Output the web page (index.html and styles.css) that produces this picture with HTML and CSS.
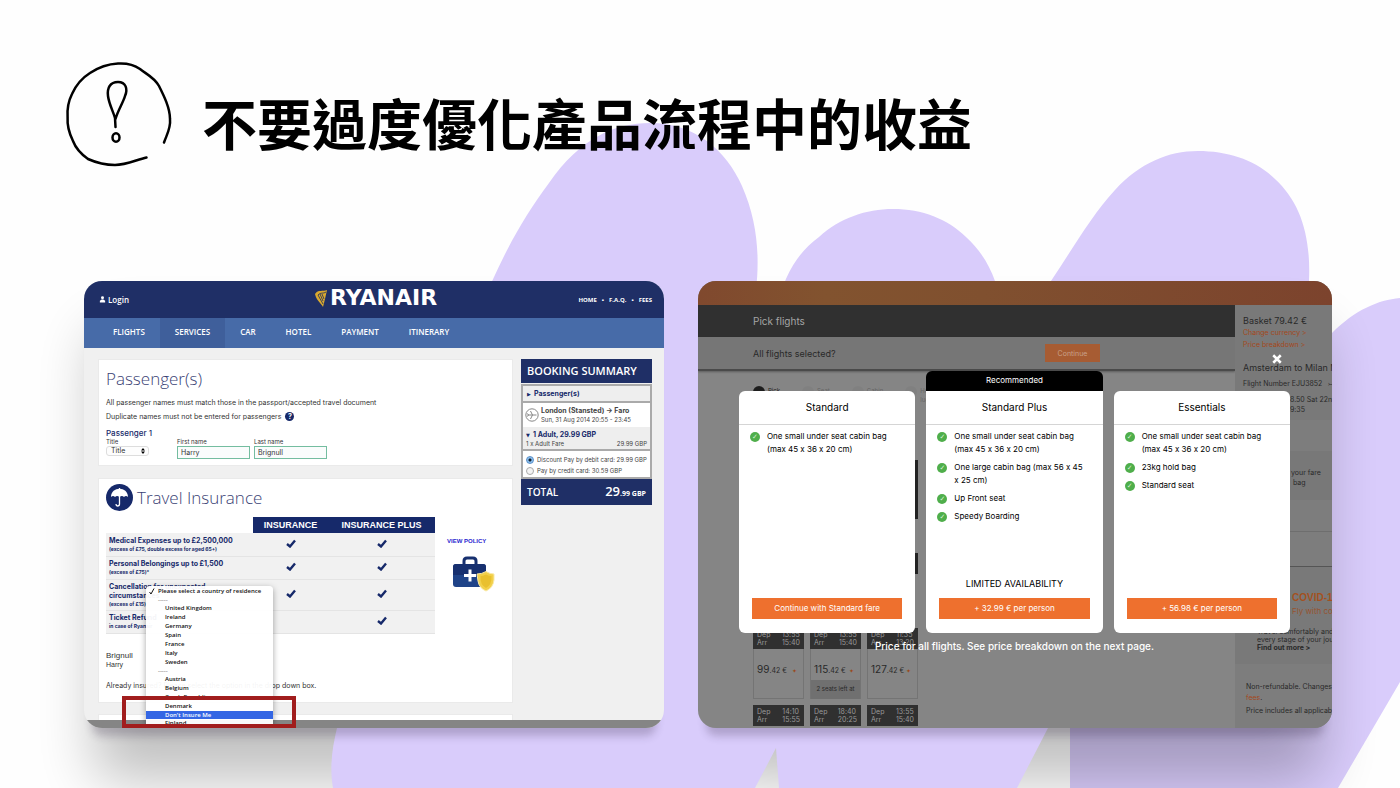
FILE: index.html
```html
<!DOCTYPE html>
<html lang="zh-Hant">
<head>
<meta charset="utf-8">
<title>不要過度優化產品流程中的收益</title>
<link rel="stylesheet" href="styles.css">
</head>
<body>
<main class="slide">
  <svg class="backdrop" viewBox="0 0 1400 788" preserveAspectRatio="none" aria-hidden="true">
    <defs>
      <filter id="soft" x="-30%" y="-30%" width="160%" height="160%"><feGaussianBlur stdDeviation="28"/></filter>
    </defs>
    <g class="blob">
      <path d="M1070 788V300L1051 281C1075 245 1092 215 1115 190C1140 163 1168 151 1198 151C1228 151 1256 160 1275 179C1300 202 1311 235 1309 281V350L1332 333C1355 310 1378 300 1400 298V682L1338 788Z"/>
    </g>
    <g class="shade" filter="url(#soft)">
      <rect x="94" y="330" width="560" height="450" rx="20"/>
      <rect x="708" y="330" width="614" height="450" rx="20"/>
    </g>
    <g class="blob">
      <path d="M333 788C329 765 333 745 337 728L480 310C500 260 520 222 549 183C580 138 615 123 650 123C695 123 726 150 742 186C757 220 760 255 756 290V310H776C784 275 798 252 819 237C840 218 866 209 893 209C922 209 948 219 966 237C980 250 989 264 995 281L1048 728L1017 788H779L776 748L755 788Z"/>
    </g>
  </svg>

  <header class="title">
    <svg class="title-icon" viewBox="0 0 106 104" aria-hidden="true">
      <path d="M98 80.500C101 72 105 66 104 57C104 46 98 34 93 24C88 15 80 12 74 7C67 2 60 1 52 1.500C42 2 33 5 24 11C16 16 10 23 6 32C2 40 1 46 1.600 55C1 64 3 71 7 79C10 87 15 92 22 97C31 101 40 103 49 103C60 103 70 98 80.500 95.500" />
      <path d="M49.500 65L49 56C47 49 43 42 42 34C41 26 44 20 52 20C60 20 62 27 59 34C57 41 52 48 49.500 57"/>
      <ellipse cx="50" cy="75.500" rx="3.500" ry="4.300"/>
    </svg>
    <h1>不要過度優化產品流程中的收益</h1>
  </header>

  <div class="shots">
    <section class="shot ryan">
      <div class="ryan-top">
        <a class="login" href="#"><svg viewBox="0 0 8 8"><circle cx="4" cy="2" r="1.700"/><path d="M1 7.500V5.500L3 4H5L7 5.500V7.500Z"/></svg>Login</a>
        <div class="logo">
          <svg viewBox="0 0 14 19"><path d="M1 5C4 0 9 3 13 1L11 10L9 18C7 14 2 11 1 5Z" fill="#d9a92f"/><path d="M4 6L9 15M6 5L9 12M8 5L10 10M4 6C7 3 9 5 12 3" fill="none" stroke="#1c2b5e" stroke-width=".8"/></svg>
          <span>RYANAIR</span>
        </div>
        <div class="toplinks"><a href="#">HOME</a><i>•</i><a href="#">F.A.Q.</a><i>•</i><a href="#">FEES</a></div>
      </div>
      <nav class="ryan-nav">
        <a href="#">FLIGHTS</a><a class="on" href="#">SERVICES</a><a href="#">CAR</a><a href="#">HOTEL</a><a href="#">PAYMENT</a><a href="#">ITINERARY</a>
      </nav>
      <div class="ryan-body">
        <div class="panels">
          <section class="panel passengers">
            <h2>Passenger(s)</h2>
            <p>All passenger names must match those in the passport/accepted travel document</p>
            <p>Duplicate names must not be entered for passengers <b class="help">?</b></p>
            <h3>Passenger 1</h3>
            <div class="fields">
              <div class="f-title"><label for="t">Title</label><div class="selwrap"><select id="t"><option>Title</option></select><svg viewBox="0 0 4 6"><path d="M0 2.500L2 0L4 2.500ZM0 3.500L2 6L4 3.500Z"/></svg></div></div>
              <div class="f-name"><label for="fn">First name</label><input id="fn" value="Harry"></div>
              <div class="f-name"><label for="ln">Last name</label><input id="ln" value="Brignull"></div>
            </div>
          </section>
          <section class="panel insurance">
            <div class="ins-head">
              <svg viewBox="0 0 27 27"><circle cx="13.500" cy="13.500" r="13.500" fill="#16296a"/><path d="M5 13C5 2 22 2 22 13Q20 11 18 13Q16 11 13.500 13Q11 11 9 13Q7 11 5 13Z" fill="#fff"/><path d="M13.500 4V20Q13.500 22 11.500 22Q10 22 10 20" fill="none" stroke="#fff" stroke-width="1.300"/></svg>
              <h2>Travel Insurance</h2>
            </div>
            <div class="ins-main">
              <table>
                <thead><tr><td></td><th>INSURANCE</th><th>INSURANCE PLUS</th></tr></thead>
                <tbody>
                  <tr><td>Medical Expenses up to £2,500,000<small>(excess of £75, double excess for aged 65+)</small></td><td class="c"><svg class="tick" viewBox="0 0 10 9"><path d="M1 5L4 7.500L9 1.500"/></svg></td><td class="c"><svg class="tick" viewBox="0 0 10 9"><path d="M1 5L4 7.500L9 1.500"/></svg></td></tr>
                  <tr><td>Personal Belongings up to £1,500<small>(excess of £75)*</small></td><td class="c"><svg class="tick" viewBox="0 0 10 9"><path d="M1 5L4 7.500L9 1.500"/></svg></td><td class="c"><svg class="tick" viewBox="0 0 10 9"><path d="M1 5L4 7.500L9 1.500"/></svg></td></tr>
                  <tr><td>Cancellation for unexpected<br>circumstances<small>(excess of £15)</small></td><td class="c"><svg class="tick" viewBox="0 0 10 9"><path d="M1 5L4 7.500L9 1.500"/></svg></td><td class="c"><svg class="tick" viewBox="0 0 10 9"><path d="M1 5L4 7.500L9 1.500"/></svg></td></tr>
                  <tr><td>Ticket Refund<small>in case of Ryanair</small></td><td class="c"></td><td class="c"><svg class="tick" viewBox="0 0 10 9"><path d="M1 5L4 7.500L9 1.500"/></svg></td></tr>
                </tbody>
              </table>
              <div class="policy">
                <a href="#">VIEW POLICY</a>
                <svg viewBox="0 0 42 36"><path d="M11 8V5Q11 2 14 2H20Q23 2 23 5V8" fill="none" stroke="#17306f" stroke-width="3"/><rect x="0" y="8" width="33" height="23" rx="3" fill="#1f4388"/><path d="M0 19H33V11Q33 8 30 8H3Q0 8 0 11Z" fill="#17306f"/><path d="M17 13.500V25.500M11 19.500H23" stroke="#fff" stroke-width="3"/><path d="M24 18Q29 18 33 15.500Q37 18 41 18V24Q40 32 33 35Q26 32 25 25Z" fill="#f2d04a" stroke="#f9e9a6"/><path d="M27.500 20Q30 20 33 18.500Q36 20 38.500 20Q39 29 33 32Q27 29 27.500 20Z" fill="#e9c02e"/></svg>
              </div>
            </div>
            <p class="who">Brignull<span>Harry</span></p>
            <p class="already">Already insured? Please select the option in the drop down box.</p>
            <ul class="menu" role="listbox" aria-label="Country of residence">
              <li class="first"><svg viewBox="0 0 6 7"><path d="M.500 4L2 6L5 .500"/></svg>Please select a country of residence</li>
              <li class="sep">-----</li><li>United Kingdom</li><li>Ireland</li><li>Germany</li><li>Spain</li><li>France</li><li>Italy</li><li>Sweden</li>
              <li class="sep">-----</li><li>Austria</li><li>Belgium</li><li>Czech Republic</li><li>Denmark</li><li class="hot" role="option" aria-selected="true">Don't Insure Me</li><li>Finland</li>
            </ul>
            <div class="mark"></div>
          </section>
          <section class="panel peek"></section>
        </div>
        <aside class="summary">
          <h2>BOOKING SUMMARY</h2>
          <div class="box">
            <div class="pax"><i>▶</i>Passenger(s)</div>
            <div class="leg"><svg viewBox="0 0 14 14"><circle cx="7" cy="7" r="6.200"/><path d="M2.500 7H11.500M7.500 7L5.500 3M7.500 7L5.500 11M3.500 7L2.500 5.500M3.500 7L2.500 8.500"/></svg><div><b>London (Stansted) → Faro</b><span>Sun, 31 Aug 2014 20:55 - 23:45</span></div></div>
            <div class="fare"><b><i>▼</i>1 Adult, 29.99 GBP</b><p><span>1 x Adult Fare</span><span>29.99 GBP</span></p></div>
            <div class="pay">
              <label><input type="radio" name="pay" checked>Discount Pay by debit card: 29.99 GBP</label>
              <label><input type="radio" name="pay">Pay by credit card: 30.59 GBP</label>
            </div>
          </div>
          <div class="total"><span>TOTAL</span><strong>29<small>.99 GBP</small></strong></div>
        </aside>
      </div>
      <div class="ryan-foot"></div>
    </section>

    <section class="shot easy">
      <div class="brand"></div>
      <div class="easy-page">
        <div class="flow">
          <div class="pick">Pick flights</div>
          <div class="sel"><span>All flights selected?</span><button class="cont" type="button">Continue</button></div>
          <div class="results">
            <div class="steps"><span class="now"><i></i>Pick</span><span><i></i>Seat</span><span><i></i>Cabin</span><span><i></i>Hold<br>luggage</span></div>
            <div class="rail"><i class="tall"></i><i></i></div>
            <div class="flights">
              <div class="slot"><div class="when"><span>Dep</span><span>13:55</span><span>Arr</span><span>15:40</span></div><div class="cost"><b>99</b>.42 €<i>✦</i></div></div>
              <div class="slot"><div class="when"><span>Dep</span><span>13:55</span><span>Arr</span><span>15:40</span></div><div class="cost"><b>115</b>.42 €<i>✦</i></div><div class="left">2 seats left at</div></div>
              <div class="slot"><div class="when"><span>Dep</span><span>11:35</span><span>Arr</span><span>13:20</span></div><div class="cost"><b>127</b>.42 €<i>✦</i></div></div>
              <div class="when"><span>Dep</span><span>14:10</span><span>Arr</span><span>15:55</span></div>
              <div class="when"><span>Dep</span><span>18:40</span><span>Arr</span><span>20:25</span></div>
              <div class="when"><span>Dep</span><span>13:55</span><span>Arr</span><span>15:40</span></div>
            </div>
          </div>
        </div>
        <aside class="basket">
          <div class="trip">
            <h3>Basket 79.42 €</h3>
            <a href="#">Change currency &gt;</a>
            <a href="#">Price breakdown &gt;</a>
            <h4>Amsterdam to Milan M</h4>
            <p>Flight Number EJU3852 &nbsp; ⤚–</p>
            <p class="times">8.50 Sat 22nd<br>9:35</p>
          </div>
          <div class="bags">your fare<br>&nbsp;bag</div>
          <div class="rule"></div>
          <div class="covid">
            <h3>COVID-19</h3><h4>Fly with co</h4>
            <p>Travel comfortably and<br>every stage of your jou<br><b>Find out more &gt;</b></p>
          </div>
          <div class="terms"><p>Non-refundable. Changes</p><a href="#">fees</a>.<p>Price includes all applicable</p></div>
        </aside>
      </div>

      <div class="modal">
        <div class="plan">
          <div class="card"><h3>Standard</h3>
            <ul><li>One small under seat cabin bag (max 45 x 36 x 20 cm)</li></ul>
            <button type="button">Continue with Standard fare</button></div>
        </div>
        <div class="plan best">
          <div class="flag">Recommended</div>
          <div class="card"><h3>Standard Plus</h3>
            <ul><li>One small under seat cabin bag (max 45 x 36 x 20 cm)</li><li>One large cabin bag (max 56 x 45 x 25 cm)</li><li>Up Front seat</li><li>Speedy Boarding</li></ul>
            <p class="limited">LIMITED AVAILABILITY</p>
            <button type="button">+ 32.99 € per person</button></div>
        </div>
        <div class="plan">
          <div class="card"><h3>Essentials</h3>
            <ul><li>One small under seat cabin bag (max 45 x 36 x 20 cm)</li><li>23kg hold bag</li><li>Standard seat</li></ul>
            <button type="button">+ 56.98 € per person</button></div>
        </div>
        <p class="note">Price for all flights. See price breakdown on the next page.</p>
        <button class="close" type="button" aria-label="Close"><svg viewBox="0 0 8 8"><path d="M1 1L7 7M7 1L1 7"/></svg></button>
      </div>
    </section>
  </div>
</main>
</body>
</html>
```

FILE: styles.css
```css
* { box-sizing: border-box; margin: 0; padding: 0; }
body { background: #fefefe; font-family: "Liberation Sans", Arial, "Noto Sans CJK TC", sans-serif; }
a { color: inherit; text-decoration: none; }
i { font-style: normal; }
ul { list-style: none; }
button, input, select { font: inherit; color: inherit; border: 0; border-radius: 0; }

.slide { position: relative; min-height: 100vh; overflow: hidden; padding: 62px 68px 60px 84px; }
.backdrop { position: absolute; inset: 0; width: 100%; height: 100%; }
.blob { fill: #d9ccfb; }
.shade { fill: #000; opacity: .24; }

.title { position: relative; display: flex; align-items: flex-end; gap: 30px; margin-left: -18px; margin-bottom: 115px; }
.title-icon { width: 106px; height: 104px; flex: none; fill: none; stroke: #000; stroke-width: 2.500; stroke-linecap: round; stroke-linejoin: round; overflow: visible; }
.title h1 { font: bold 55px/90px "Noto Sans CJK TC", sans-serif; }

.shots { position: relative; display: grid; grid-template-columns: 580fr 634fr; gap: 34px; }
.shot { position: relative; overflow: hidden; border-radius: 18px; box-shadow: 0 16px 8px -8px rgba(40, 30, 60, .24); min-width: 0; }

/* booking form */
.ryan { display: flex; flex-direction: column; background: #f0f0f0; color: #333; font: 7px/9px Inter, "Liberation Sans", sans-serif; }
.ryan-top { display: grid; grid-template-columns: 1fr auto 1fr; align-items: center; height: 37px; padding: 0 12px 0 15px; background: #1f2f66; color: #fff; }
.login { display: flex; align-items: center; gap: 2px; font: 600 8px/10px "Open Sans", sans-serif; }
.login svg { width: 7px; height: 7px; fill: #fff; }
.logo { display: flex; align-items: center; gap: 2px; padding-bottom: 3px; font: bold 22px/30px "DejaVu Sans", sans-serif; }
.logo svg { width: 14px; height: 19px; }
.toplinks { display: flex; justify-content: flex-end; gap: 5px; font: bold 6px/10px "Open Sans", sans-serif; }
.ryan-nav { display: flex; height: 30px; padding-left: 14px; background: #476ba8; color: #fff; font: 600 8px/28px "Open Sans", sans-serif; }
.ryan-nav a { padding: 0 15px; }
.ryan-nav .on { background: #3f5f9b; }
.ryan-body { display: flex; align-items: flex-start; gap: 9px; padding: 11px 12px 0 15px; }
.ryan-foot { height: 8px; background: #858585; }
.panels { flex: 1; display: flex; flex-direction: column; gap: 14px; min-width: 0; padding-top: 1px; }
.panel { background: #fff; padding: 0 7px; outline: 1px solid #eaeaea; }
.panel h2 { font: 300 17px/24px "Open Sans", sans-serif; color: #3a4274; }
.passengers { padding-top: 7px; height: 105px; }
.passengers p { line-height: 14px; }
.passengers h2 { margin-bottom: 5px; }
.help { display: inline-block; width: 9px; border-radius: 50%; background: #16296a; color: #fff; text-align: center; font-size: 7px; line-height: 9px; margin-left: 2px; }
.passengers h3 { font-size: 8px; line-height: 9px; margin-top: 5px; font-weight: 500; color: #16296a; }
.fields { display: flex; font-size: 6px; }
.fields label { display: block; line-height: 8px; }
.f-title { width: 71px; }
.f-name { width: 77px; }
.selwrap { position: relative; width: 43px; }
.fields select { appearance: none; display: block; width: 43px; height: 10px; padding: 0 4px; border: 1px solid #ddd; border-radius: 3px; background: #fdfdfd; font-size: 7px; line-height: 8px; }
.selwrap svg { position: absolute; right: 4px; top: 2px; width: 4px; height: 6px; }
.fields input { display: block; width: 73px; height: 13px; padding: 0 3px; border: 1px solid #74bda0; background: #fafcfc; font-size: 7px; }
.insurance { position: relative; min-height: 223px; }
.ins-head { display: flex; align-items: center; gap: 4px; padding-top: 5px; }
.ins-head svg { width: 27px; height: 27px; }
.ins-main { display: flex; justify-content: space-between; padding: 6px 17px 0 0; }
table { width: 329px; border-collapse: collapse; color: #16296a; font-weight: bold; }
th { background: #16296a; color: #fff; height: 16px; font: bold 9px/15px "Liberation Sans", sans-serif; white-space: nowrap; }
th:nth-child(2) { width: 75px; }
th:nth-child(3) { width: 107px; }
tbody tr { background: #f1f1f1; border-bottom: 1px solid #e4e4e4; }
tbody td { height: 23px; padding: 2px 3px; }
tbody td small { display: block; font-size: 5px; line-height: 8px; }
.c { text-align: center; }
.tick { width: 10px; height: 9px; fill: none; stroke: #16296a; stroke-width: 2.400; }
.policy { width: 41px; margin-top: 19px; font: bold 6px/10px "Liberation Sans", sans-serif; color: #2a1fd0; white-space: nowrap; }
.policy svg { display: block; width: 42px; height: 36px; margin: 10px 0 0 6px; }
.who { margin-top: 17px; font: 8px/10px "Liberation Sans", sans-serif; }
.who span { display: block; font-size: 7px; line-height: 8px; }
.already { margin-top: 12px; line-height: 10px; }
.menu { position: absolute; left: 47px; top: 107px; width: 127px; padding-top: 1px; background: rgba(255, 255, 255, .95); border-radius: 4px 4px 0 0; box-shadow: 0 2px 6px rgba(0, 0, 0, .35); color: #111; font: 600 6px/9px "Open Sans", sans-serif; z-index: 2; }
.menu li { padding-left: 19px; }
.menu .first { display: flex; gap: 3px; padding-left: 3px; }
.menu .first svg { width: 6px; height: 7px; fill: none; stroke: #111; margin-top: 1px; }
.menu .sep { padding-left: 12px; line-height: 8px; color: #888; }
.menu .hot { background: #3466e4; color: #fff; line-height: 8px; }
.mark { position: absolute; left: 23px; top: 217px; width: 174px; height: 32px; border: 4px solid #a11d1d; z-index: 3; }
.peek { height: 5px; margin-top: -1px; }

.summary { width: 131px; color: #444; }
.summary h2 { height: 24px; padding-left: 6px; background: #1f2f66; color: #fff; font: 600 11px/24px "Open Sans", sans-serif; }
.box { border: 2px solid #aaa; margin-top: 1px; background: #fff; }
.pax { height: 15px; padding-left: 4px; background: #eee; font-weight: bold; line-height: 15px; color: #16296a; }
.pax i, .fare i { display: inline-block; width: 7px; font: 5px/5px "DejaVu Sans", sans-serif; }
.leg { display: flex; align-items: center; gap: 2px; height: 26px; padding-left: 2px; border-top: 2px solid #aaa; font-size: 6px; line-height: 9px; white-space: nowrap; }
.leg svg { width: 14px; height: 14px; fill: none; stroke: #888; }
.leg b, .leg span { display: block; }
.leg b { font-size: 7px; }
.fare { height: 22px; padding: 3px 3px 0; background: #eee; line-height: 9px; font-size: 6px; }
.fare b { display: block; font-size: 7px; color: #16296a; }
.fare p { display: flex; justify-content: space-between; }
.pay { border-top: 2px solid #aaa; padding: 3px 3px 1px; font-size: 6px; line-height: 11px; white-space: nowrap; }
.pay label { display: flex; align-items: center; gap: 3px; }
.pay input { appearance: none; width: 8px; height: 8px; border: 1px solid #aaa; border-radius: 50%; background: #f4f4f4; }
.pay input:checked { border: 1px solid #5b8fc7; background: radial-gradient(#123 0 1px, #8bc0ef 2px); }
.total { display: flex; justify-content: space-between; align-items: center; height: 26px; padding: 0 6px; background: #1f2f66; color: #fff; font: 600 10px/26px "Open Sans", sans-serif; }
.total strong { font-size: 13px; font-weight: 600; }
.total small { font-size: 7px; font-weight: 700; }

/* fare picker */
.easy { display: flex; flex-direction: column; background: #858585; color: #292929; font: 7px/9px Inter, sans-serif; font-feature-settings: "calt" 0; }
.brand { height: 24px; background: linear-gradient(90deg, #80492e, #82532f 20%, #80502f 45%, #7c432d); }
.easy-page { flex: 1; display: flex; min-height: 0; }
.flow { flex: 1; display: flex; flex-direction: column; min-width: 0; }
.pick { height: 32px; padding-left: 55px; background: #303030; color: #a5a5a5; font-size: 10px; line-height: 32px; }
.sel { display: flex; align-items: center; justify-content: space-between; height: 34px; padding: 0 135px 0 55px; background: #767676; border-bottom: 2px solid #4a4a4a; font-size: 9px; box-shadow: 0 1px 2px rgba(0, 0, 0, .3); }
.cont { width: 55px; height: 18px; background: #a75c33; color: #c9a18a; font-size: 7px; }
.results { flex: 1; display: flex; flex-direction: column; justify-content: space-between; padding: 15px 0 2px 55px; }
.steps { display: flex; gap: 22px; height: 20px; color: #666; font-size: 6px; }
.steps span { display: flex; gap: 3px; }
.steps i { width: 12px; height: 12px; border-radius: 50%; background: #808080; }
.steps .now { color: #222; }
.steps .now i { background: #1d1d1d; }
.rail { display: grid; gap: 34px; width: 165px; }
.rail i { height: 21px; background: #222; }
.rail .tall { height: 59px; }
.flights { display: grid; grid-template-columns: repeat(3, 51px); gap: 6px; }
.slot { border: 1px solid #747474; border-top: 0; height: 71px; }
.slot .when { margin: 0 -1px; }
.when { display: grid; grid-template-columns: 1fr auto; padding: 3px 4px; height: 21px; background: #303030; color: #999; line-height: 8px; }
.cost { display: flex; align-items: baseline; padding: 16px 3px 0; height: 31px; font-size: 7px; }
.cost b { font-size: 10px; font-weight: normal; }
.cost i { margin-left: auto; padding-right: 3px; color: #9a4a1c; font-size: 6px; }
.left { height: 19px; background: #707070; text-align: center; line-height: 18px; font-size: 6px; }

.basket { width: 97px; overflow: hidden; background: #7d7d7d; white-space: nowrap; }
.basket a { color: #a4481c; }
.trip { height: 115px; padding: 9px 0 0 8px; background: #797979; }
.trip h3 { font-size: 9px; line-height: 13px; font-weight: normal; }
.trip a { display: block; line-height: 12px; font-size: 7px; }
.trip h4 { margin-top: 10px; font-size: 9px; line-height: 14px; font-weight: normal; }
.trip p { line-height: 17px; }
.basket .times { padding-left: 47px; line-height: 10px; margin-top: 3px; }
.bags { height: 49px; margin: 31px 0; padding: 17px 0 0 56px; background: #787878; line-height: 10px; }
.rule { height: 36px; border-top: 1px solid #6e6e6e; border-bottom: 1px solid #555; }
.covid { height: 97px; padding: 23px 0 0 22px; background: #797979; line-height: 8px; }
.covid h3 { padding-left: 35px; color: #a4511f; font: bold 10px/16px "Liberation Sans", sans-serif; }
.covid h4 { padding-left: 35px; color: #97532f; font-size: 8px; line-height: 10px; font-weight: normal; margin-bottom: 12px; }
.terms { padding: 17px 0 0 11px; line-height: 11px; }
.terms p:last-child { margin-top: 2px; }

.modal { position: absolute; inset: 90px 42px auto 41px; display: grid; grid-template-columns: repeat(3, 1fr); column-gap: 11px; align-items: end; color: #000; }
.flag { height: 20px; border-radius: 6px 6px 0 0; background: #000; color: #fff; text-align: center; font-size: 8px; line-height: 19px; }
.card { display: flex; flex-direction: column; height: 242px; padding-bottom: 14px; border-radius: 6px; background: #fff; }
.best .card { border-radius: 0 0 6px 6px; }
.card h3 { height: 34px; border-bottom: 1px solid #d5d5d5; text-align: center; font-size: 10px; line-height: 33px; font-weight: normal; }
.card ul { display: grid; gap: 5px; padding: 5px 15px 0 12px; font-size: 8px; line-height: 13px; }
.card li { position: relative; padding-left: 16px; }
.card li::before { content: "✓"; position: absolute; left: -1px; top: 2px; width: 10px; height: 10px; border-radius: 50%; background: #4fae4b; color: #d5f0d3; text-align: center; font: bold 7px/10px "DejaVu Sans", sans-serif; }
.card button { margin: auto 13px 0; height: 21px; background: #ee702e; color: #fff; font-size: 8px; }
.limited { margin-top: auto; text-align: center; font-size: 9px; line-height: 12px; }
.limited + button { margin-top: 8px; }
.note { grid-column: 1 / -1; padding-top: 7px; text-align: center; color: #fff; font-size: 10px; line-height: 12px; font-weight: 500; }
.close { position: absolute; right: 8px; top: -17px; width: 10px; height: 10px; background: none; }
.close svg { display: block; width: 10px; height: 10px; stroke: #fff; stroke-width: 2; }
```
